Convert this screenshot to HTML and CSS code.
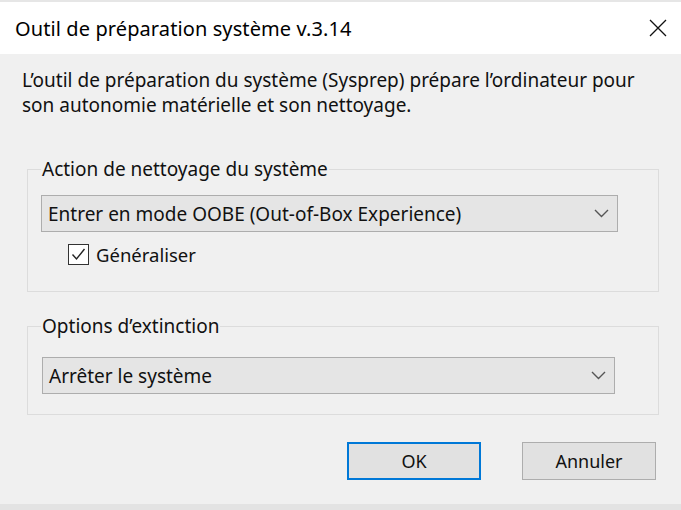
FILE: index.html
```html
<!DOCTYPE html>
<html lang="fr">
<head>
<meta charset="utf-8">
<title>Outil de préparation système v.3.14</title>
<link rel="stylesheet" href="styles.css">
</head>
<body>
<div class="window">
  <div class="topstrip"></div>
  <div class="titlebar">
    <span class="title">Outil de préparation système v.3.14</span>
    <svg class="close" width="18" height="18" viewBox="0 0 18 18"><path d="M1 1L17 17M17 1L1 17" stroke="#111" stroke-width="1.3" fill="none"/></svg>
  </div>
  <div class="content">
    <p class="desc">L’outil de préparation du système (Sysprep) prépare l’ordinateur pour<br>son autonomie matérielle et son nettoyage.</p>
    <fieldset class="group group-1">
      <legend class="legend">Action de nettoyage du système</legend>
      <div class="combo combo-1">
        <span class="combo-text">Entrer en mode OOBE (Out-of-Box Experience)</span>
        <svg class="chev" width="15" height="9" viewBox="0 0 15 9"><path d="M1 1L7.5 7.5L14 1" stroke="#555" stroke-width="1.4" fill="none"/></svg>
      </div>
      <label class="check-row">
        <span class="check-box"><svg width="19" height="19" viewBox="0 0 19 19"><path d="M3.5 9.5L7.5 14L15.5 4" stroke="#222" stroke-width="1.4" fill="none"/></svg></span>
        <span class="check-label">Généraliser</span>
      </label>
    </fieldset>
    <fieldset class="group group-2">
      <legend class="legend">Options d’extinction</legend>
      <div class="combo combo-2">
        <span class="combo-text">Arrêter le système</span>
        <svg class="chev" width="15" height="9" viewBox="0 0 15 9"><path d="M1 1L7.5 7.5L14 1" stroke="#555" stroke-width="1.4" fill="none"/></svg>
      </div>
    </fieldset>
    <div class="buttons">
      <button class="btn btn-ok">OK</button>
      <button class="btn btn-cancel">Annuler</button>
    </div>
  </div>
  <div class="bottomstrip"></div>
</div>
</body>
</html>
```
FILE: styles.css
```css
* { box-sizing: border-box; }
html, body { margin: 0; padding: 0; }
body {
  background: #f0f0f0;
  font-family: "Noto Sans", "DejaVu Sans", sans-serif;
  color: #000;
}
.window {
  width: 681px;
  height: 510px;
  display: flex;
  flex-direction: column;
  background: #f0f0f0;
  overflow: hidden;
}
.topstrip { height: 2px; background: #e6e6e6; flex: none; }
.titlebar {
  height: 52px;
  flex: none;
  background: #fff;
  display: flex;
  align-items: center;
  padding: 0 14px 0 15px;
}
.title { font-size: 20px; flex: 1; letter-spacing: 0.1px; }
.close { flex: none; }
.content { flex: 1; padding: 0 22px 0 27px; }
.desc {
  margin: 14px 0 0 -5px;
  font-size: 19px;
  line-height: 25px;
  color: #111;
}
.group {
  margin: 39px 0 0 0;
  border: 1px solid #dcdcdc;
  padding: 0 13px 26px 13px;
  min-width: 0;
}
.group-2 { margin-top: 22px; padding-bottom: 20px; }
.legend {
  font-size: 19px;
  line-height: 24px;
  padding: 0 1px;
  color: #111;
}
.combo {
  display: flex;
  align-items: center;
  height: 37px;
  border: 1px solid #adadad;
  background: #e5e5e5;
  padding: 0 8px 0 6px;
  font-size: 19px;
  color: #111;
}
.combo-1 { margin-top: 14px; margin-right: 27px; }
.combo-2 { margin-top: 19px; margin-right: 30px; margin-left: 1px; }
.combo-text { flex: 1; white-space: nowrap; }
.chev { flex: none; }
.check-row {
  display: flex;
  align-items: center;
  margin: 11px 0 0 27px;
  height: 22px;
  font-size: 18.5px;
  color: #111;
}
.check-box {
  width: 21px;
  height: 21px;
  border: 1px solid #333;
  background: #fff;
  display: flex;
  align-items: center;
  justify-content: center;
  margin-right: 7px;
}
.buttons {
  display: flex;
  justify-content: flex-end;
  gap: 41px;
  margin-top: 27px;
  padding-right: 3px;
}
.btn {
  font-family: inherit;
  font-size: 18px;
  height: 38px;
  background: #e1e1e1;
  color: #111;
  border: 1px solid #adadad;
  padding: 0;
}
.btn-ok { width: 134px; border: 2px solid #0078d7; }
.btn-cancel { width: 134px; }
.bottomstrip { height: 6px; background: #e3e3e3; flex: none; margin-top: auto; }
```
